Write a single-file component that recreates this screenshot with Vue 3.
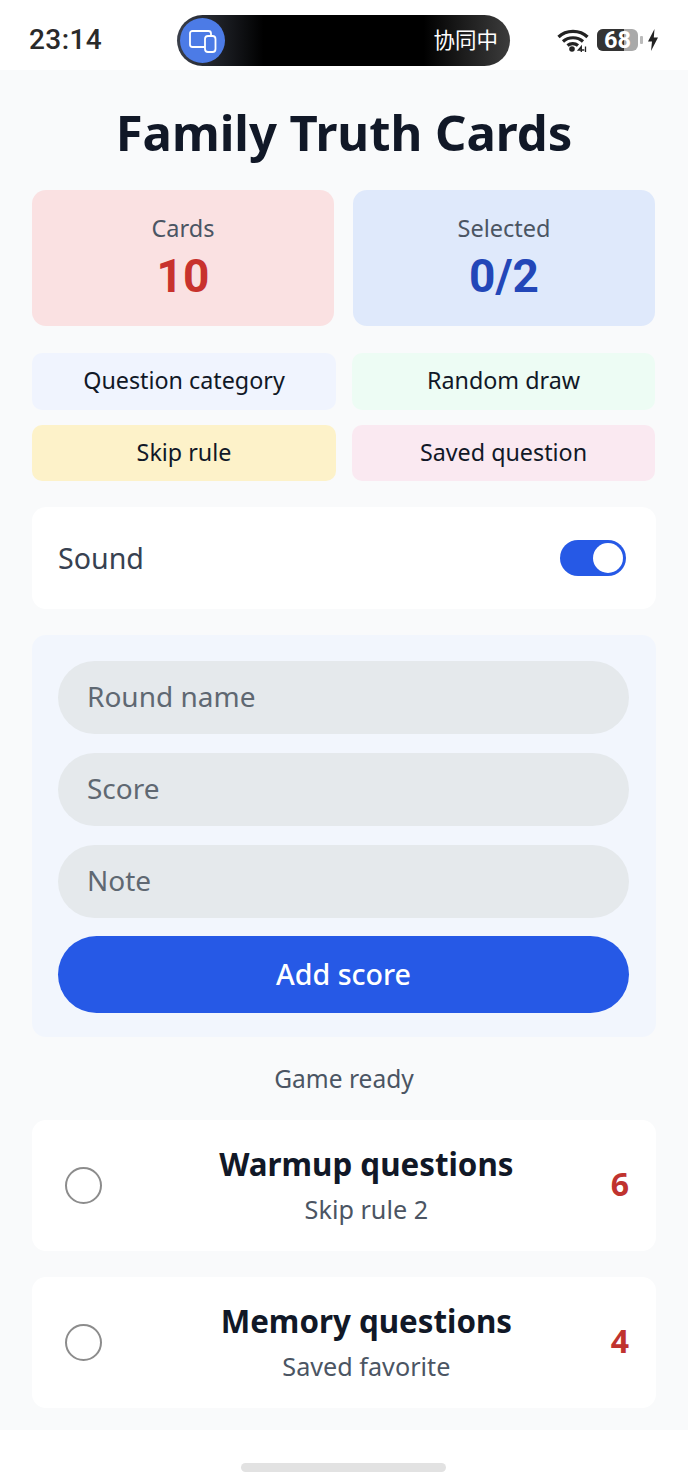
<script setup>
const stats = [
  { label: 'Cards', value: '10', tone: 'red' },
  { label: 'Selected', value: '0/2', tone: 'blue' },
]
const actions = [
  { label: 'Question category', tone: 'a-blue' },
  { label: 'Random draw', tone: 'a-green' },
  { label: 'Skip rule', tone: 'a-yellow' },
  { label: 'Saved question', tone: 'a-pink' },
]
const fields = ['Round name', 'Score', 'Note']
const rows = [
  { title: 'Warmup questions', sub: 'Skip rule 2', count: 6 },
  { title: 'Memory questions', sub: 'Saved favorite', count: 4 },
]
</script>

<template>
  <div class="screen">
    <header class="status">
      <span class="time">23:14</span>
      <div class="island">
        <span class="island-icon">
          <svg width="32" height="32" viewBox="0 0 32 32" fill="none" stroke="#fff" stroke-width="1.8">
            <path d="M17 22H5.500A2.500 2.500 0 0 1 3 19.500V8.500A2.500 2.500 0 0 1 5.500 6H21.500A2.500 2.500 0 0 1 24 8.500V10" stroke-linecap="round" />
            <rect x="18" y="11" width="10.500" height="16" rx="3" />
          </svg>
        </span>
        <span class="island-text">协同中</span>
      </div>
      <div class="status-right">
        <svg width="32" height="24" viewBox="0 0 32 24" fill="none" stroke="#222" stroke-width="3.200">
          <path d="M1.500 9C9 1.500 23 1.500 30.500 9" />
          <path d="M6 13.500C11.500 8.500 20.500 8.500 26 13.500" />
          <path d="M10.500 17.500C13.500 15 18 15 21 17.500" />
          <circle cx="15" cy="21" r="2.800" fill="#222" stroke="none" />
          <path d="M24.300 24V18.500L21.300 22H27.300M28.500 18.500V24" stroke-width="1.300" />
        </svg>
        <span class="battery"><span class="battery-fill"></span><span class="battery-num">68</span></span>
        <span class="battery-tip"></span>
        <svg width="12" height="22" viewBox="0 0 12 22"><path d="M7.500 0 1 12.500H5L4 22 11 8.500H6.800Z" fill="#222" /></svg>
      </div>
    </header>

    <main class="content">
      <h1 class="title">Family Truth Cards</h1>

      <section class="stats">
        <div v-for="s in stats" :key="s.label" class="stat" :class="s.tone">
          <span class="stat-label">{{ s.label }}</span>
          <strong class="stat-value">{{ s.value }}</strong>
        </div>
      </section>

      <section class="actions">
        <button v-for="a in actions" :key="a.label" class="action" :class="a.tone">{{ a.label }}</button>
      </section>

      <section class="sound">
        <span class="sound-label">Sound</span>
        <span class="switch"><span class="knob"></span></span>
      </section>

      <section class="form">
        <input v-for="f in fields" :key="f" class="field" :placeholder="f" />
        <button class="submit">Add score</button>
      </section>

      <p class="state">Game ready</p>

      <section class="list">
        <article v-for="r in rows" :key="r.title" class="row">
          <span class="radio"></span>
          <div class="row-body">
            <h2 class="row-title">{{ r.title }}</h2>
            <p class="row-sub">{{ r.sub }}</p>
          </div>
          <span class="row-count">{{ r.count }}</span>
        </article>
      </section>
    </main>

    <footer class="nav"><span class="handle"></span></footer>
  </div>
</template>

<style>
html, body { margin: 0; background: #fff; }
</style>

<style scoped>
.screen {
  width: 688px;
  height: 1482px;
  display: flex;
  flex-direction: column;
  background: #fff;
  font-family: "Noto Sans", "Noto Sans CJK SC", sans-serif;
  color: #111827;
  overflow: hidden;
}
.status {
  height: 70px;
  flex: none;
  display: flex;
  align-items: center;
  justify-content: space-between;
  padding: 0 29px;
  box-sizing: border-box;
  position: relative;
}
.time {
  font-family: Roboto, sans-serif;
  font-size: 28px;
  font-weight: 500;
  letter-spacing: 0.4px;
  color: #2a2a2a;
  margin-top: 9px;
}
.island {
  position: absolute;
  left: 177px;
  top: 15px;
  width: 333px;
  height: 51px;
  border-radius: 26px;
  background: linear-gradient(90deg, #3a3f4a 0, #000 26%, #000 74%, #3c3c3c 100%);
  display: flex;
  align-items: center;
  justify-content: space-between;
  padding: 0 12px 0 3px;
  box-sizing: border-box;
}
.island-icon {
  width: 45px;
  height: 45px;
  border-radius: 50%;
  background: #4c7be6;
  display: flex;
  align-items: center;
  justify-content: center;
}
.island-text {
  font-family: "Noto Sans CJK SC", sans-serif;
  color: #fff;
  font-size: 21.500px;
  line-height: 30px;
  padding-bottom: 3px;
}
.status-right {
  display: flex;
  align-items: center;
  margin-top: 10px;
}
.battery {
  position: relative;
  width: 41px;
  height: 22px;
  margin-left: 8px;
  border-radius: 6px;
  background: #a9a9a9;
  display: flex;
  align-items: center;
  justify-content: center;
}
.battery-fill {
  position: absolute;
  left: 0;
  top: 0;
  bottom: 0;
  width: 66%;
  background: #333;
  border-radius: 6px 0 0 6px;
}
.battery-num {
  position: relative;
  color: #fff;
  font-family: Roboto, sans-serif;
  font-weight: 700;
  font-size: 23.500px;
  line-height: 22px;
}
.battery-tip {
  width: 3px;
  height: 8px;
  margin: 0 4px 0 2px;
  background: #bbb;
  border-radius: 1px;
}
.content {
  flex: 1;
  background: #f9fafb;
  padding: 30px 32px 22px 32px;
  box-sizing: border-box;
  display: flex;
  flex-direction: column;
}
.title {
  margin: 0 0 26px;
  font-size: 49px;
  line-height: 64px;
  font-weight: 700;
  text-align: center;
}
.stats {
  display: grid;
  grid-template-columns: 302px 302px;
  gap: 19px;
}
.stat {
  height: 136px;
  border-radius: 14px;
  display: flex;
  flex-direction: column;
  align-items: center;
  justify-content: center;
}
.stat.red { background: #fae1e2; color: #c8322d; }
.stat.blue { background: #dfe9fb; color: #2347b8; }
.stat-label {
  font-size: 23.500px;
  line-height: 32px;
  color: #4b5563;
}
.stat-value {
  margin-top: 4px;
  font-size: 46px;
  line-height: 56px;
  font-weight: 700;
  font-family: Roboto, sans-serif;
}
.actions {
  margin-top: 27px;
  display: grid;
  grid-template-columns: 304px 303px;
  grid-auto-rows: 56.500px;
  gap: 15px 16px;
}
.action {
  border: 0;
  padding: 0 0 2px;
  border-radius: 10px;
  font: inherit;
  font-size: 23.300px;
  color: #111827;
}
.a-blue { background: #f0f4fe; }
.a-green { background: #edfcf4; }
.a-yellow { background: #fdf2c9; }
.a-pink { background: #fae9f1; }
.sound {
  margin-top: 26px;
  height: 102px;
  padding: 0 29px 0 26px;
  box-sizing: border-box;
  background: #fff;
  border-radius: 14px;
  display: flex;
  align-items: center;
  justify-content: space-between;
  font-size: 28.600px;
  color: #374151;
}
.sound-label { padding-bottom: 2px; }
.switch {
  width: 66px;
  height: 36px;
  margin-right: 1px;
  border-radius: 18px;
  background: #2659e6;
  position: relative;
}
.knob {
  position: absolute;
  top: 3px;
  right: 3px;
  width: 30px;
  height: 30px;
  border-radius: 50%;
  background: #fff;
}
.form {
  margin-top: 26px;
  height: 402px;
  padding: 26px 26px 24px;
  box-sizing: border-box;
  background: #f2f6fd;
  border-radius: 14px;
  display: flex;
  flex-direction: column;
  gap: 19px;
}
.field {
  height: 73px;
  flex: none;
  border: 0;
  outline: 0;
  padding: 0 30px 4px 29px;
  box-sizing: border-box;
  width: 571px;
  border-radius: 37px;
  background: #e5e9ec;
  font: inherit;
  font-size: 28px;
}
.field::placeholder { color: #5f6872; opacity: 1; }
.submit {
  height: 77px;
  width: 571px;
  flex: none;
  margin-top: -1px;
  border: 0;
  padding: 0 0 2px;
  border-radius: 39px;
  background: #2659e6;
  color: #fff;
  font: inherit;
  font-size: 28.600px;
  font-weight: 500;
}
.state {
  margin: 0;
  height: 83px;
  box-sizing: border-box;
  display: flex;
  align-items: center;
  justify-content: center;
  font-size: 24.500px;
  color: #4b5563;
}
.list {
  display: flex;
  flex-direction: column;
  gap: 26.500px;
}
.row {
  height: 130.500px;
  background: #fff;
  border-radius: 14px;
  padding: 0 27px 0 33px;
  box-sizing: border-box;
  display: flex;
  align-items: center;
}
.radio {
  width: 37px;
  height: 37px;
  flex: none;
  box-sizing: border-box;
  border: 2px solid #8c8c8c;
  border-radius: 50%;
}
.row-body {
  flex: 1;
  padding: 0 0 1px 20px;
  text-align: center;
}
.row-title {
  margin: 0;
  font-size: 31.300px;
  line-height: 42px;
  font-weight: 700;
  color: #111827;
}
.row-sub {
  margin: 7px 0 0;
  font-size: 25.200px;
  line-height: 34px;
  color: #4b5563;
}
.row-count {
  font-size: 32px;
  line-height: 42px;
  padding-bottom: 2px;
  font-weight: 700;
  color: #c0332f;
}
.nav {
  height: 52px;
  flex: none;
  display: flex;
  justify-content: center;
  padding: 33px 2px 0 0;
  box-sizing: border-box;
}
.handle {
  width: 205px;
  height: 9px;
  border-radius: 5px;
  background: #e2e2e2;
}
</style>
